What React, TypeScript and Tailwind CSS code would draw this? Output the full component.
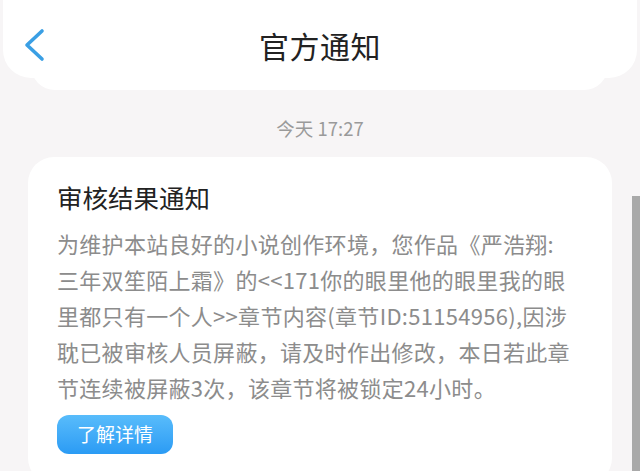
import React from 'react';

const bodyLines = [
  '为维护本站良好的小说创作环境，您作品《严浩翔:',
  '三年双笙陌上霜》的<<171你的眼里他的眼里我的眼',
  '里都只有一个人>>章节内容(章节ID:51154956),因涉',
  '耽已被审核人员屏蔽，请及时作出修改，本日若此章',
  '节连续被屏蔽3次，该章节将被锁定24小时。',
];

const NoticePage = () => {
  return (
    <div
      className="relative w-[640px] h-[471px] overflow-hidden bg-[#f7f5f6]"
      style={{ fontFamily: '"Noto Sans CJK SC", "Noto Sans", sans-serif' }}
    >
      {/* Header */}
      <div className="relative z-10 mx-[3px] h-[78px] bg-white rounded-b-[28px] grid grid-cols-[1fr_auto_1fr] items-center pt-[12px]">
        <div className="pl-[20px] flex items-center">
          <svg width="24" height="34" viewBox="0 0 24 34" fill="none">
            <path d="M19 3 L4 17 L19 31" stroke="#3a9fe4" strokeWidth="3.6" strokeLinecap="round" strokeLinejoin="round" />
          </svg>
        </div>
        <h1 className="text-[30px] leading-[36px] text-[#222] tracking-[0.5px]">官方通知</h1>
        <div />
      </div>

      {/* previous message card, tucked under header */}
      <div className="ml-[31px] mr-[32px] h-[40px] -mt-[28px] bg-white rounded-b-[24px]" />

      {/* Timestamp */}
      <div className="mt-[26px] text-center text-[18.5px] leading-[24px] text-[#9a9a9a]">今天 17:27</div>

      {/* Notice card */}
      <div className="mt-[17px] ml-[28px] mr-[28px] bg-white rounded-[26px] pl-[29px] pr-[20px] pt-[23px] pb-[30px]">
        <div className="text-[25.5px] leading-[34px] text-[#222]">审核结果通知</div>
        <div className="mt-[11px] text-[22px] leading-[36px] text-[#8c8c8c] tracking-[0.3px]">
          {bodyLines.map((l, i) => (
            <div key={i} className="whitespace-nowrap">{l}</div>
          ))}
        </div>
        <button className="mt-[10px] w-[116px] h-[39px] rounded-[12px] bg-gradient-to-b from-[#58bcfb] to-[#2a9bf4] text-white text-[19px] flex items-center justify-center">
          了解详情
        </button>
      </div>

      {/* scrollbar */}
      <div className="absolute right-0 top-[196px] w-[8px] h-[275px] bg-[#a9a9a9]" />
    </div>
  );
};

export default function App() {
  return <NoticePage />;
}
